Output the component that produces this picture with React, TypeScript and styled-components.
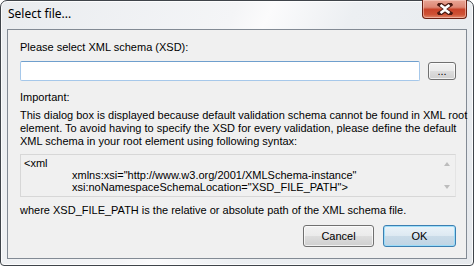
import styled, { createGlobalStyle } from "styled-components";

const GlobalStyle = createGlobalStyle`
  html, body {
    margin: 0;
    padding: 0;
    background: #ffffff;
  }
`;

const Window = styled.div`
  box-sizing: border-box;
  width: 474px;
  height: 266px;
  border: 1px solid #3f444a;
  border-radius: 7px 7px 4px 4px;
  background: linear-gradient(
    115deg,
    #e9ecef 0%,
    #f4f5f7 40%,
    #fbfbfc 46%,
    #eceff2 60%,
    #e6e9ed 100%
  );
  display: flex;
  flex-direction: column;
  padding: 0 6px 6px 6px;
  box-shadow: inset 0 0 0 1px rgba(255, 255, 255, 0.8);
`;

const TitleBar = styled.div`
  height: 28px;
  display: flex;
  align-items: flex-start;
  justify-content: space-between;
`;

const Title = styled.span`
  font-family: "Noto Sans", "Open Sans", sans-serif;
  font-size: 12px;
  color: #000;
  padding: 5px 0 0 1px;
  line-height: 16px;
`;

const CloseButton = styled.div`
  width: 43px;
  height: 18px;
  margin-top: -1px;
  border: 1px solid #6a2013;
  border-top: none;
  border-radius: 0 0 4px 4px;
  background: linear-gradient(
    180deg,
    #e8a595 0%,
    #dd8774 40%,
    #c9432a 52%,
    #cf5235 80%,
    #e0886c 100%
  );
  box-shadow: inset 0 0 0 1px rgba(255, 220, 210, 0.5);
  display: flex;
  align-items: center;
  justify-content: center;
`;

const Client = styled.div`
  flex: 1;
  border: 1px solid #828a94;
  background: #f0f0f0;
  padding: 11px 10px 11px 12px;
  display: flex;
  flex-direction: column;
  font-family: "Liberation Sans", Arial, sans-serif;
  font-size: 11px;
  color: #000;
  -webkit-font-smoothing: none;
`;

const Label = styled.div<{ $gap?: number }>`
  line-height: 13px;
  margin-top: ${(p) => p.$gap ?? 0}px;
  white-space: nowrap;
`;

const InputRow = styled.div`
  display: flex;
  align-items: center;
  gap: 8px;
  margin-top: 7px;
  height: 20px;
`;

const TextInput = styled.div`
  box-sizing: border-box;
  width: 400px;
  height: 20px;
  background: #fff;
  border: 1px solid #a6c8ea;
  border-top-color: #6f9fcd;
  border-radius: 2px;
`;

const PushButton = styled.div<{ $default?: boolean; $w: number; $h: number }>`
  box-sizing: border-box;
  width: ${(p) => p.$w}px;
  height: ${(p) => p.$h}px;
  border: 1px solid ${(p) => (p.$default ? "#3c7fb1" : "#707070")};
  border-radius: 3px;
  background: ${(p) =>
    p.$default
      ? "linear-gradient(180deg, #eaf3f9 0%, #dde9f2 48%, #c9dbe8 52%, #bfd4e4 100%)"
      : "linear-gradient(180deg, #f2f2f2 0%, #ebebeb 48%, #dddddd 52%, #cfcfcf 100%)"};
  box-shadow: inset 0 0 0 1px
    ${(p) => (p.$default ? "rgba(150, 220, 250, 0.9)" : "rgba(255, 255, 255, 0.7)")};
  display: flex;
  align-items: center;
  justify-content: center;
  line-height: 13px;
`;

const Paragraph = styled.div`
  margin-top: 5px;
  line-height: 13px;
  white-space: nowrap;
`;

const CodeBox = styled.div`
  box-sizing: border-box;
  margin-top: 6px;
  height: 43px;
  border: 1px solid #d7d7d7;
  border-right-color: #e4e4e4;
  background: #f0f0f0;
  display: flex;
`;

const CodeText = styled.div`
  flex: 1;
  padding: 2px 0 0 3px;
`;

const CodeLine = styled.div<{ $indent?: number }>`
  height: 12px;
  line-height: 12px;
  white-space: nowrap;
  padding-left: ${(p) => p.$indent ?? 0}px;
`;

const ScrollBar = styled.div`
  width: 17px;
  display: flex;
  flex-direction: column;
  justify-content: space-between;
  align-items: center;
  padding: 7px 0 7px 0;
`;

const Arrow = styled.div<{ $down?: boolean }>`
  width: 0;
  height: 0;
  border-left: 3.5px solid transparent;
  border-right: 3.5px solid transparent;
  ${(p) =>
    p.$down
      ? "border-top: 4px solid #bcbcbc;"
      : "border-bottom: 4px solid #bcbcbc;"}
`;

const ButtonRow = styled.div`
  margin-top: auto;
  display: flex;
  justify-content: flex-end;
  gap: 9px;
`;

export default function App() {
  return (
    <>
      <GlobalStyle />
      <Window>
        <TitleBar>
          <Title>Select file...</Title>
          <CloseButton>
            <svg width="16" height="12" viewBox="0 0 16 12">
              <path
                d="M3 1.5 L8 5 L13 1.5 M3 10.5 L8 7 L13 10.5"
                stroke="#4b1a12"
                strokeWidth="4.6"
                strokeLinecap="square"
                fill="none"
              />
              <path
                d="M3.5 2 L8 5.3 L12.5 2 M3.5 10 L8 6.7 L12.5 10"
                stroke="#ffffff"
                strokeWidth="2.6"
                fill="none"
              />
            </svg>
          </CloseButton>
        </TitleBar>
        <Client>
          <Label>Please select XML schema (XSD):</Label>
          <InputRow>
            <TextInput />
            <PushButton $w={28} $h={18}>...</PushButton>
          </InputRow>
          <Label $gap={10}>Important:</Label>
          <Paragraph>
            This dialog box is displayed because default validation schema cannot be found in XML root
            <br />
            element. To avoid having to specify the XSD for every validation, please define the default
            <br />
            XML schema in your root element using following syntax:
          </Paragraph>
          <CodeBox>
            <CodeText>
              <CodeLine>{"<xml"}</CodeLine>
              <CodeLine $indent={48}>{'xmlns:xsi="http://www.w3.org/2001/XMLSchema-instance"'}</CodeLine>
              <CodeLine $indent={48}>{'xsi:noNamespaceSchemaLocation="XSD_FILE_PATH">'}</CodeLine>
            </CodeText>
            <ScrollBar>
              <Arrow />
              <Arrow $down />
            </ScrollBar>
          </CodeBox>
          <Label $gap={7}>
            where XSD_FILE_PATH is the relative or absolute path of the XML schema file.
          </Label>
          <ButtonRow>
            <PushButton $w={71} $h={22}>Cancel</PushButton>
            <PushButton $w={73} $h={22} $default>OK</PushButton>
          </ButtonRow>
        </Client>
      </Window>
    </>
  );
}
